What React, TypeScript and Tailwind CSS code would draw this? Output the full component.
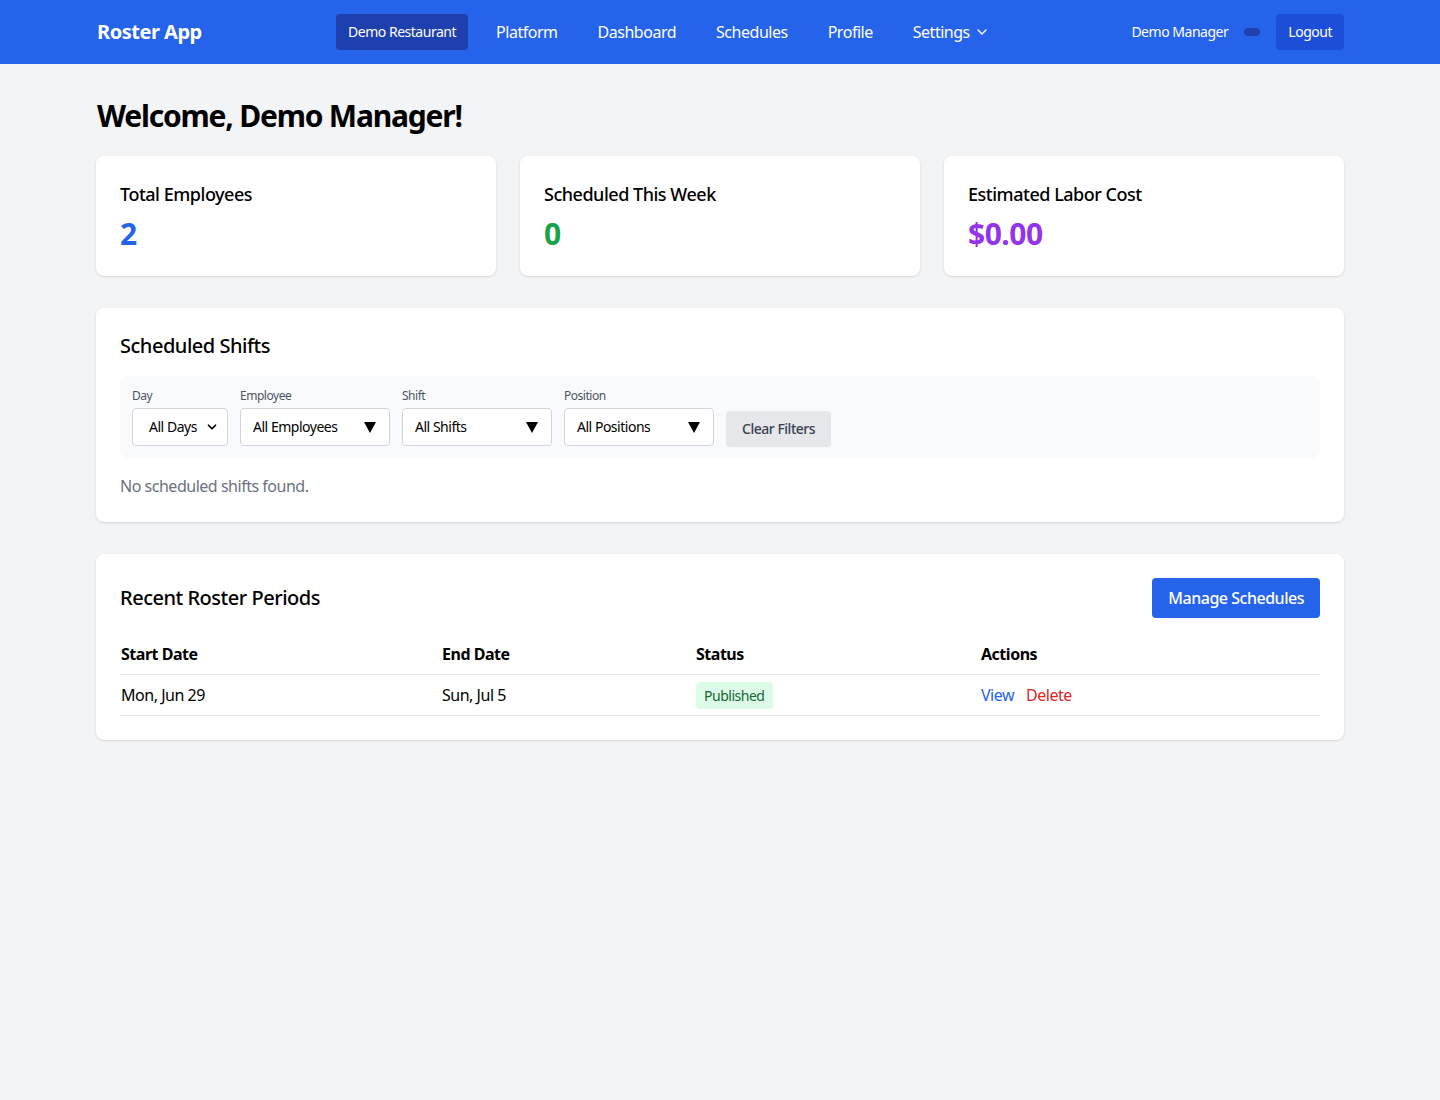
import React from 'react';
import { ChevronDown } from 'lucide-react';

const navLinks = ['Platform', 'Dashboard', 'Schedules', 'Profile'];

const stats = [
  { label: 'Total Employees', value: '2', color: 'text-[#2563eb]' },
  { label: 'Scheduled This Week', value: '0', color: 'text-[#16a34a]' },
  { label: 'Estimated Labor Cost', value: '$0.00', color: 'text-[#9333ea]' },
];

const filters = [
  { label: 'Employee', value: 'All Employees' },
  { label: 'Shift', value: 'All Shifts' },
  { label: 'Position', value: 'All Positions' },
];

const Triangle = () => (
  <svg width="12" height="11" viewBox="0 0 12 11">
    <polygon points="0,0 12,0 6,11" fill="#000" />
  </svg>
);

const FakeSelect: React.FC<{ value: string }> = ({ value }) => (
  <div className="flex items-center justify-between w-[150px] h-[38px] pl-3 pr-[13px] bg-white border border-[#d1d5db] rounded text-sm text-black">
    <span>{value}</span>
    <Triangle />
  </div>
);

const App: React.FC = () => {
  return (
    <div className="min-h-screen bg-[#f3f4f6] font-['Noto_Sans',sans-serif] tracking-[-0.03em] text-black">
      {/* Top bar */}
      <nav className="bg-[#2563eb] text-white">
        <div className="max-w-7xl mx-auto px-4 h-16 flex items-center justify-between">
          <div className="flex items-center">
            <span className="text-xl font-bold w-[240px] pl-px">Roster App</span>
            <div className="flex items-center">
              <span className="bg-[#1e40af] rounded px-3 py-2 text-sm mr-3">Demo Restaurant</span>
              {navLinks.map((l) => (
                <span key={l} className="px-4 mr-2 text-base">{l}</span>
              ))}
              <span className="px-4 flex items-center gap-1 text-base">
                Settings <ChevronDown size={16} />
              </span>
            </div>
          </div>
          <div className="flex items-center">
            <span className="text-sm">Demo Manager</span>
            <span className="ml-4 w-4 h-2 rounded-full bg-[#1e40af]"></span>
            <span className="ml-4 bg-[#1d4ed8] rounded px-3 py-2 text-sm">Logout</span>
          </div>
        </div>
      </nav>

      <main className="max-w-7xl mx-auto px-4 py-8">
        <h1 className="text-3xl font-bold pt-0.5 mb-[22px] pl-px tracking-[-0.04em]">Welcome, Demo Manager!</h1>

        <div className="grid grid-cols-3 gap-6">
          {stats.map((s) => (
            <div key={s.label} className="bg-white rounded-lg shadow p-6">
              <div className="text-lg font-medium">{s.label}</div>
              <div className={`text-3xl font-bold mt-2 ${s.color}`}>{s.value}</div>
            </div>
          ))}
        </div>

        {/* Scheduled shifts */}
        <div className="bg-white rounded-lg shadow p-6 mt-8">
          <h2 className="text-xl font-medium mb-4">Scheduled Shifts</h2>
          <div className="bg-[#f9fafb] rounded-lg p-3 flex items-end gap-3">
            <div>
              <div className="text-xs text-[#4b5563] mb-1">Day</div>
              <div className="flex items-center justify-between w-[96px] h-[38px] pl-4 pr-2 bg-white border border-[#d1d5db] rounded text-sm">
                <span>All Days</span>
                <ChevronDown size={14} strokeWidth={3} />
              </div>
            </div>
            {filters.map((f) => (
              <div key={f.label}>
                <div className="text-xs text-[#4b5563] mb-1">{f.label}</div>
                <FakeSelect value={f.value} />
              </div>
            ))}
            <button className="bg-[#e5e7eb] text-[#374151] rounded px-4 py-2 text-sm font-medium mb-[-1px]">
              Clear Filters
            </button>
          </div>
          <p className="text-[#6b7280] mt-4">No scheduled shifts found.</p>
        </div>

        {/* Recent roster periods */}
        <div className="bg-white rounded-lg shadow p-6 mt-8">
          <div className="flex items-center justify-between mb-4">
            <h2 className="text-xl font-medium">Recent Roster Periods</h2>
            <button className="bg-[#2563eb] text-white rounded px-4 py-2 font-medium">Manage Schedules</button>
          </div>
          <table className="w-full text-left">
            <thead>
              <tr className="border-b border-[#e5e7eb]">
                <th className="py-2 pl-px font-bold w-[322px]">Start Date</th>
                <th className="py-2 font-bold w-[254px]">End Date</th>
                <th className="py-2 font-bold w-[285px]">Status</th>
                <th className="py-2 font-bold">Actions</th>
              </tr>
            </thead>
            <tbody>
              <tr className="border-b border-[#e5e7eb]">
                <td className="py-2 pl-px">Mon, Jun 29</td>
                <td className="py-2">Sun, Jul 5</td>
                <td className="py-2">
                  <span className="bg-[#dcfce7] text-[#166534] rounded px-2 py-1 text-sm">Published</span>
                </td>
                <td className="py-2">
                  <span className="text-[#2563eb] mr-3">View</span>
                  <span className="text-[#dc2626]">Delete</span>
                </td>
              </tr>
            </tbody>
          </table>
        </div>
      </main>
    </div>
  );
};

export default App;
